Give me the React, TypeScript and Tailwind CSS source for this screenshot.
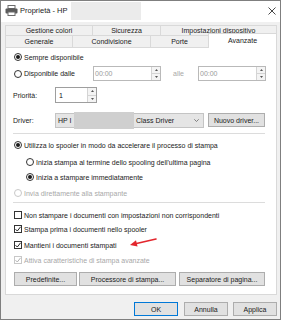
import React from "react";

function Radio({ checked = false, disabled = false }: { checked?: boolean; disabled?: boolean }) {
  return (
    <span
      className={
        disabled
          ? "w-[8px] h-[8px] rounded-full border border-[#c8c8c8] bg-white flex items-center justify-center shrink-0"
          : "w-[8px] h-[8px] rounded-full border border-[#333333] bg-white flex items-center justify-center shrink-0"
      }
    >
      {checked && <span className="w-[4px] h-[4px] rounded-full bg-[#1a1a1a]" />}
    </span>
  );
}

function Check({ checked = false, disabled = false }: { checked?: boolean; disabled?: boolean }) {
  return (
    <span
      className={
        disabled
          ? "w-[8px] h-[8px] border border-[#c8c8c8] bg-white flex items-center justify-center shrink-0"
          : "w-[8px] h-[8px] border border-[#333333] bg-white flex items-center justify-center shrink-0"
      }
    >
      {checked && (
        <svg width="6" height="6" viewBox="0 0 6 6">
          <path d="M0.5 3.2 L2.3 5 L5.6 0.8" fill="none" stroke={disabled ? "#b0b0b0" : "#222"} strokeWidth="1" />
        </svg>
      )}
    </span>
  );
}

function Spinner() {
  return (
    <div className="w-[9px] flex flex-col border-l border-[#d4d4d4] bg-[#f4f4f4]">
      <div className="flex-1 flex items-center justify-center border-b border-[#d4d4d4]">
        <svg width="3" height="2" viewBox="0 0 3 2">
          <path d="M0 2 L1.5 0 L3 2 Z" fill="#555" />
        </svg>
      </div>
      <div className="flex-1 flex items-center justify-center">
        <svg width="3" height="2" viewBox="0 0 3 2">
          <path d="M0 0 L1.5 2 L3 0 Z" fill="#555" />
        </svg>
      </div>
    </div>
  );
}

function Btn({ children, w, primary = false }: { children: React.ReactNode; w: string; primary?: boolean }) {
  return (
    <div
      className={
        (primary
          ? "h-[14px] border border-[#0078d7] bg-[#e1e1e1] flex items-center justify-center "
          : "h-[14px] border border-[#adadad] bg-[#e1e1e1] flex items-center justify-center ") + w
      }
    >
      {children}
    </div>
  );
}

export default function App() {
  return (
    <div className="relative w-[281px] h-[320px] border border-[#7f7f7f] bg-[#f0f0f0] flex flex-col font-['Liberation_Sans',Arial,sans-serif] text-[7px] leading-none text-[#1a1a1a] overflow-hidden">
      {/* Title bar */}
      <div className="h-[21px] bg-white flex items-center pb-[2px] shrink-0">
        <svg className="ml-[4px]" width="13" height="11" viewBox="0 0 13 11">
          <rect x="3" y="0.5" width="7" height="3" fill="#fff" stroke="#6b6b6b" strokeWidth="1" />
          <rect x="0.5" y="3.5" width="12" height="5" rx="1" fill="#5a5a5a" />
          <rect x="3" y="7" width="7" height="3.5" fill="#fff" stroke="#6b6b6b" strokeWidth="1" />
        </svg>
        <span className="ml-[2px] text-[7.5px] text-[#222]">Proprietà - HP</span>
        <div className="ml-[3px] w-[70px] h-[18px] bg-[#ebebeb]" />
        <div className="flex-1" />
        <svg className="mr-[4px]" width="8" height="8" viewBox="0 0 8 8">
          <path d="M0.5 0.5 L7.5 7.5 M7.5 0.5 L0.5 7.5" stroke="#333" strokeWidth="0.9" />
        </svg>
      </div>

      {/* Tabs */}
      <div className="pl-[4px] pt-[3px] flex flex-col shrink-0">
        <div className="flex">
          <div className="w-[88px] h-[11px] border border-[#d9d9d9] bg-[#f0f0f0] flex items-center justify-center">Gestione colori</div>
          <div className="-ml-px w-[69px] h-[11px] border border-[#d9d9d9] bg-[#f0f0f0] flex items-center justify-center">Sicurezza</div>
          <div className="-ml-px w-[117px] h-[11px] border border-[#d9d9d9] bg-[#f0f0f0] flex items-center justify-center">Impostazioni dispositivo</div>
        </div>
        <div className="-mt-px flex items-end h-[12px]">
          <div className="w-[68px] h-[12px] border border-b-0 border-[#d9d9d9] bg-[#f0f0f0] flex items-center justify-center">Generale</div>
          <div className="-ml-px w-[79px] h-[12px] border border-b-0 border-[#d9d9d9] bg-[#f0f0f0] flex items-center justify-center">Condivisione</div>
          <div className="-ml-px w-[59px] h-[12px] border border-b-0 border-[#d9d9d9] bg-[#f0f0f0] flex items-center justify-center">Porte</div>
          <div className="-ml-px w-[69px] h-[15px] -mb-px relative z-10 border border-b-0 border-[#d9d9d9] bg-white flex items-start justify-center pt-[3px]">Avanzate</div>
        </div>
      </div>

      {/* Panel */}
      <div className="ml-[4px] w-[272px] h-[248px] border border-[#d9d9d9] bg-white flex flex-col pl-[7px] shrink-0">
        <div className="mt-[2px] h-[14px] flex items-center gap-[2px] ml-[1px]">
          <Radio checked />
          <span>Sempre disponibile</span>
        </div>
        <div className="mt-[2px] h-[15px] flex items-center">
          <div className="w-[79px] flex items-center gap-[2px] ml-[1px]">
            <Radio />
            <span>Disponibile dalle</span>
          </div>
          <div className="w-[68px] h-[15px] border border-[#b9b9b9] flex">
            <div className="flex-1 flex items-center pl-[1px] text-[#9a9a9a]">00:00</div>
            <Spinner />
          </div>
          <div className="w-[37px] pl-[12px] text-[#a8a8a8]">alle</div>
          <div className="w-[68px] h-[15px] border border-[#b9b9b9] flex">
            <div className="flex-1 flex items-center pl-[1px] text-[#9a9a9a]">00:00</div>
            <Spinner />
          </div>
        </div>
        <div className="mt-[6px] h-[16px] flex items-center">
          <span className="w-[42px]">Priorità:</span>
          <div className="w-[42px] h-[16px] border border-[#9e9e9e] flex">
            <div className="flex-1 flex items-center pl-[3px] text-[#111]">1</div>
            <Spinner />
          </div>
        </div>
        <div className="mt-[9px] h-[16px] flex items-center">
          <span className="w-[42px]">Driver:</span>
          <div className="w-[149px] h-[15px] border border-[#c4c4c4] bg-[#e5e5e5] flex items-center">
            <span className="pl-[2px] w-[18px]">HP I</span>
            <div className="w-[60px] h-[17px] bg-[#cfcfcf]" />
            <span className="ml-[2px]">Class Driver</span>
            <div className="flex-1" />
            <svg className="mr-[4px]" width="5" height="3" viewBox="0 0 5 3">
              <path d="M0.3 0.3 L2.5 2.5 L4.7 0.3" fill="none" stroke="#666" strokeWidth="0.8" />
            </svg>
          </div>
          <div className="ml-[4px]">
            <Btn w="w-[57px]">Nuovo driver...</Btn>
          </div>
        </div>
        <div className="mt-[5px] w-[252px] h-px bg-[#dcdcdc]" />
        <div className="mt-[4px] h-[14px] flex items-center gap-[2px] ml-[1px]">
          <Radio checked />
          <span>Utilizza lo spooler in modo da accelerare il processo di stampa</span>
        </div>
        <div className="mt-[3px] h-[14px] flex items-center gap-[2px] ml-[13px]">
          <Radio />
          <span>Inizia stampa al termine dello spooling dell'ultima pagina</span>
        </div>
        <div className="mt-[1px] h-[14px] flex items-center gap-[2px] ml-[13px]">
          <Radio checked />
          <span>Inizia a stampare immediatamente</span>
        </div>
        <div className="mt-[2px] h-[14px] flex items-center gap-[2px] ml-[1px] text-[#a8a8a8]">
          <Radio disabled />
          <span>Invia direttamente alla stampante</span>
        </div>
        <div className="mt-[2px] w-[252px] h-px bg-[#dcdcdc]" />
        <div className="mt-[5px] h-[14px] flex items-center gap-[2px] ml-[1px]">
          <Check />
          <span>Non stampare i documenti con impostazioni non corrispondenti</span>
        </div>
        <div className="h-[14px] flex items-center gap-[2px] ml-[1px]">
          <Check checked />
          <span>Stampa prima i documenti nello spooler</span>
        </div>
        <div className="mt-[2px] h-[14px] flex items-center gap-[2px] ml-[1px]">
          <Check checked />
          <span>Mantieni i documenti stampati</span>
        </div>
        <div className="mt-[1px] h-[14px] flex items-center gap-[2px] ml-[1px] text-[#a8a8a8]">
          <Check checked disabled />
          <span>Attiva caratteristiche di stampa avanzate</span>
        </div>
        <div className="mt-[5px] flex ml-[1px]">
          <Btn w="w-[63px]">Predefinite...</Btn>
          <div className="ml-[2px]">
            <Btn w="w-[97px]">Processore di stampa...</Btn>
          </div>
          <div className="ml-[3px]">
            <Btn w="w-[86px]">Separatore di pagina...</Btn>
          </div>
        </div>
      </div>

      {/* Bottom buttons */}
      <div className="mt-[7px] flex justify-end mr-[3px]">
        <Btn w="w-[44px]" primary>OK</Btn>
        <div className="ml-[6px]">
          <Btn w="w-[44px]">Annulla</Btn>
        </div>
        <div className="ml-[5px]">
          <Btn w="w-[44px]">Applica</Btn>
        </div>
      </div>

      {/* Red annotation arrow */}
      <svg className="absolute left-[126px] top-[234px]" width="32" height="14" viewBox="0 0 32 14">
        <path d="M29 4 L9.5 8.5" stroke="#e3262d" strokeWidth="1.6" strokeLinecap="round" />
        <path d="M3 10 L10.6 11.6 L9 5.2 Z" fill="#e3262d" />
      </svg>
    </div>
  );
}
